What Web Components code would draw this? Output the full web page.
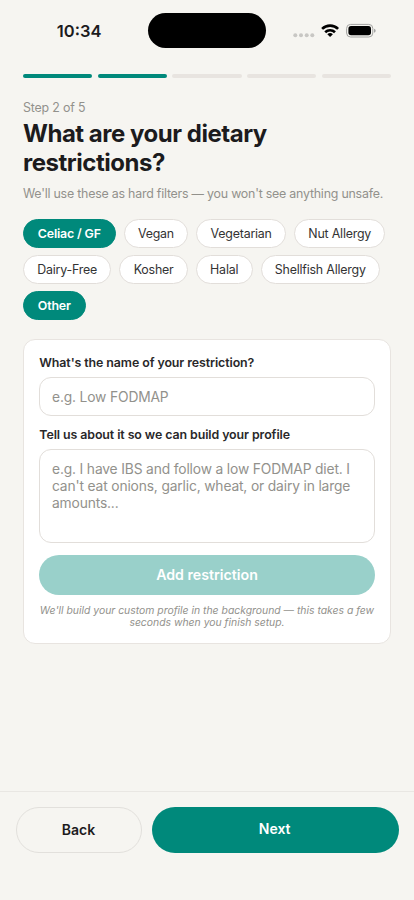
<!DOCTYPE html>
<html lang="en"><head><meta charset="utf-8"><title>Dietary restrictions</title>
<style>
html,body{margin:0;height:900px;background:#f6f5f1;overflow:hidden}
body{font-family:Inter,"Liberation Sans",sans-serif;color:#1c1b1d;--teal:#00897b;--line:#e8e4e0;--edge:#e2deda;--muted:#92918c}
</style></head><body>
<onboarding-screen></onboarding-screen>
<script>
const define=(name,html)=>customElements.define(name,class extends HTMLElement{
  constructor(){super();this.attachShadow({mode:'open'}).innerHTML=html;}
});
define('status-bar',`<style>
:host{display:flex;height:62px;box-sizing:border-box;padding:13px 0 0 56.8px}
.time{width:91.2px;font-size:16.5px;line-height:20px;font-weight:600;padding-top:8px;box-sizing:border-box}
.island{width:118px;height:35px;border-radius:18px;background:#000}
svg{display:block;margin-left:27px}
</style><div class="time">10:34</div><div class="island"></div>
<svg width="86" height="35" viewBox="293 13 86 35">
<g fill="#c8c7c4"><circle cx="295.3" cy="35.2" r="2"/><circle cx="301" cy="35.2" r="2"/><circle cx="306.7" cy="35.2" r="2"/><circle cx="312.3" cy="35.2" r="2"/></g>
<g fill="none" stroke="#000" stroke-width="2.6"><path d="M322.1 28.9a11.4 11.4 0 0 1 16 0"/><path d="M325.2 32.2a7 7 0 0 1 9.8 0"/></g>
<path d="M327.3 34.3a4 4 0 0 1 5.6 0L330.1 37.1z"/>
<rect x="346.6" y="24.4" width="26.2" height="12.6" rx="4" fill="none" stroke="#a3a3a1" stroke-width="1"/>
<rect x="348.4" y="26.1" width="22.6" height="9.1" rx="2.6"/><path d="M374.1 28.7q1.5.6 1.5 2t-1.5 2z" fill="#999"/></svg>`);
define('step-progress',`<style>
:host{display:grid;grid-template-columns:repeat(5,1fr);gap:5.7px;height:4px}
i{border-radius:2px;background:var(--line)}i.on{background:var(--teal)}
</style><i class="on"></i><i class="on"></i><i></i><i></i><i></i>`);
define('choice-chip',`<style>
:host{display:flex;box-sizing:border-box;height:29px;padding:0 13.3px;border:1px solid var(--edge);border-radius:15px;background:#fff;align-items:center;justify-content:center;font-size:12.4px;letter-spacing:-.2px;color:#333;white-space:nowrap}
:host([selected]){padding:0 13.8px;letter-spacing:-.16px;background:var(--teal);border-color:var(--teal);color:#fff;font-weight:600}
</style><slot></slot>`);
define('form-field',`<style>
:host{display:block}
label{display:block;padding-left:.3px;font-size:12.4px;letter-spacing:-.09px;line-height:16px;font-weight:600;color:#29282a}
.box{margin-top:6px;box-sizing:border-box;height:var(--h);border:1px solid var(--edge);border-radius:12px;padding:11px 12px;font-size:13.8px;letter-spacing:-.15px;line-height:17px;color:var(--muted);white-space:nowrap}
</style><label><slot name="label"></slot></label><div class="box"><slot></slot></div>`);
define('pill-button',`<style>
:host{display:flex;box-sizing:border-box;align-items:center;justify-content:center;border-radius:24px;background:var(--teal);color:#fff;font-weight:600;font-size:14px}
:host([outline]){background:transparent;border:1px solid #e2e0dc;color:#1c1b1d}
:host([disabled]){background:#99d0ca;font-size:14.2px}
</style><slot></slot>`);
define('restriction-card',`<style>
:host{display:flex;flex-direction:column;box-sizing:border-box;height:305px;border:1px solid var(--line);border-radius:12px;background:#fff;padding:15px}
.name{--h:39px}.about{--h:94.5px;margin-top:11px}
pill-button{height:40px;margin-top:11.2px;flex:none}
p{margin:10.6px -5px 0;font-size:10.4px;line-height:12px;font-style:italic;text-align:center;color:var(--muted);white-space:nowrap}
</style>
<form-field class="name"><span slot="label">What's the name of your restriction?</span>e.g. Low FODMAP</form-field>
<form-field class="about"><span slot="label">Tell us about it so we can build your profile</span>e.g. I have IBS and follow a low FODMAP diet. I<br>can't eat onions, garlic, wheat, or dairy in large<br>amounts...</form-field>
<pill-button disabled>Add restriction</pill-button>
<p>We'll build your custom profile in the background — this takes a few<br>seconds when you finish setup.</p>`);
define('onboarding-screen',`<style>
:host{display:flex;flex-direction:column;height:900px;background:#f6f5f1}
main{padding:11.5px 23px 0;flex:1}
.step{margin-top:21px;font-size:12.4px;letter-spacing:-.18px;line-height:18px;color:var(--muted)}
h1{margin:2.4px 0 0;font-size:24px;letter-spacing:-.48px;line-height:29.3px;font-weight:700}
.sub{margin-top:7.8px;font-size:12.4px;letter-spacing:-.22px;line-height:18px;color:var(--muted);white-space:nowrap}
.chips{display:flex;flex-direction:column;gap:7.1px;margin-top:15.7px}
.row{display:flex;gap:8px}
restriction-card{margin-top:18.8px}
footer{height:109px;box-sizing:border-box;border-top:1px solid #e9e7e3;padding:14.6px 15px 0 15.5px;display:flex;gap:10px}
footer pill-button{height:46px}.back{width:126px}.next{flex:1;padding:0 1.2px 3px 0}
</style><status-bar></status-bar><main><step-progress></step-progress>
<div class="step">Step 2 of 5</div>
<h1>What are your dietary<br>restrictions?</h1>
<div class="sub">We'll use these as hard filters — you won't see anything unsafe.</div>
<div class="chips"><div class="row"><choice-chip selected>Celiac / GF</choice-chip><choice-chip>Vegan</choice-chip><choice-chip>Vegetarian</choice-chip><choice-chip>Nut Allergy</choice-chip></div>
<div class="row"><choice-chip>Dairy-Free</choice-chip><choice-chip>Kosher</choice-chip><choice-chip>Halal</choice-chip><choice-chip>Shellfish Allergy</choice-chip></div>
<div class="row"><choice-chip selected>Other</choice-chip></div></div>
<restriction-card></restriction-card></main>
<footer><pill-button outline class="back">Back</pill-button><pill-button class="next">Next</pill-button></footer>`);
</script></body></html>
